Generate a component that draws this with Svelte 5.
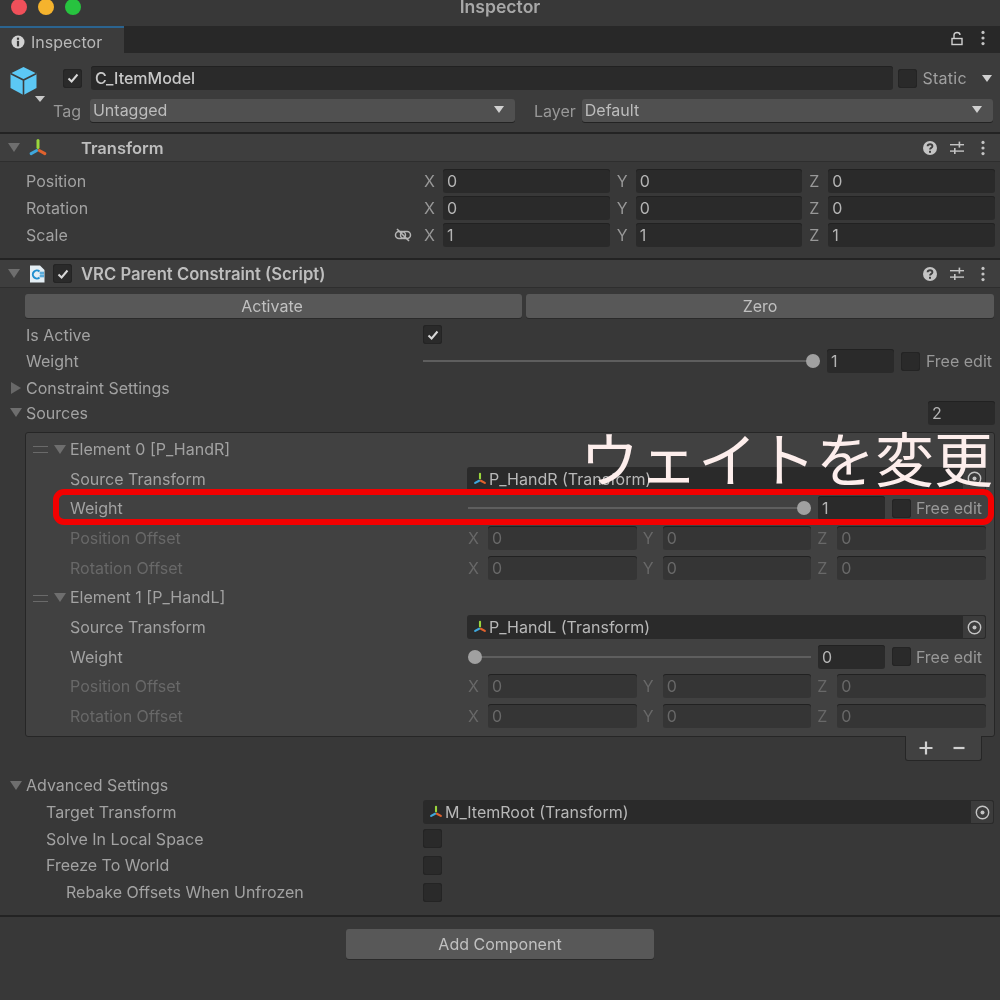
<script>
    const transformRows = [
        { label: 'Position', values: ['0', '0', '0'] },
        { label: 'Rotation', values: ['0', '0', '0'] },
        { label: 'Scale', values: ['1', '1', '1'], link: true }
    ];
    const elements = [
        { title: 'Element 0 [P_HandR]', source: 'P_HandR (Transform)', weight: 1 },
        { title: 'Element 1 [P_HandL]', source: 'P_HandL (Transform)', weight: 0 }
    ];
    const advanced = [
        { label: 'Solve In Local Space', cls: 'indent' },
        { label: 'Freeze To World', cls: 'indent' },
        { label: 'Rebake Offsets When Unfrozen', cls: 'indent2' }
    ];
    const axes = ['X', 'Y', 'Z'];
</script>

{#snippet axisIcon(size)}
    <svg class="axis" width={size} height={size} viewBox="0 0 16 16">
        <path d="M8 7.5V2" stroke="#9ad63c" stroke-width="2.4" stroke-linecap="round" />
        <path d="M7 10L2.5 12.5" stroke="#3fa7dc" stroke-width="2.4" stroke-linecap="round" />
        <path d="M9 10L13.5 12.5" stroke="#e0622e" stroke-width="2.4" stroke-linecap="round" />
    </svg>
{/snippet}

{#snippet triDown(cls)}
    <span class="tri-down {cls}"></span>
{/snippet}

{#snippet checkbox(checked)}
    <span class="check">
        {#if checked}
            <svg width="14" height="14" viewBox="0 0 14 14"><path d="M2.5 7.5L5.6 10.5L11.5 3.5" fill="none" stroke="#d8d8d8" stroke-width="2" /></svg>
        {/if}
    </span>
{/snippet}

{#snippet headerTools()}
    <div class="tools">
        <svg width="16" height="16" viewBox="0 0 16 16">
            <circle cx="8" cy="8" r="7" fill="#c4c4c4" />
            <path d="M5.6 6.2C5.8 3.6 10.4 3.6 10.4 6.2C10.4 8 8 7.8 8 9.6" fill="none" stroke="#3e3e3e" stroke-width="1.9" />
            <rect x="7" y="10.8" width="2" height="2" fill="#3e3e3e" />
        </svg>
        <svg width="16" height="16" viewBox="0 0 16 16" fill="#c4c4c4">
            <rect x="1" y="4" width="14" height="1.4" /><rect x="9.6" y="1.6" width="1.6" height="6" />
            <rect x="1" y="10.4" width="14" height="1.4" /><rect x="5" y="8" width="1.6" height="6" />
        </svg>
        <svg class="kebab" width="6" height="16" viewBox="0 0 6 16" fill="#c4c4c4">
            <circle cx="3" cy="2.4" r="1.6" /><circle cx="3" cy="8" r="1.6" /><circle cx="3" cy="13.6" r="1.6" />
        </svg>
    </div>
{/snippet}

{#snippet target()}
    <span class="target">
        <svg width="15" height="15" viewBox="0 0 15 15">
            <circle cx="7.5" cy="7.5" r="6.2" fill="none" stroke="#c4c4c4" stroke-width="1.4" />
            <circle cx="7.5" cy="7.5" r="2" fill="#c4c4c4" />
        </svg>
    </span>
{/snippet}

{#snippet sliderRow(value, thumbAtEnd)}
    <div class="slider" class:at-end={thumbAtEnd}>
        <span class="thumb"></span>
    </div>
    <span class="field num">{value}</span>
    {@render checkbox(false)}
    <span class="free">Free edit</span>
{/snippet}

{#snippet vec3(values, off)}
    <div class="vec3" class:off>
        {#each axes as axis, i}
            <div class="vec-item">
                <span class="axis-letter">{axis}</span>
                <span class="field">{values[i]}</span>
            </div>
        {/each}
    </div>
{/snippet}

<div class="window">
    <div class="titlebar">
        <div class="lights">
            <span class="light red"></span>
            <span class="light yellow"></span>
            <span class="light green"></span>
        </div>
        <span class="title">Inspector</span>
    </div>

    <div class="tabs">
        <div class="tab">
            <svg width="14" height="14" viewBox="0 0 14 14">
                <circle cx="7" cy="7" r="6.5" fill="#d2d2d2" />
                <rect x="5.9" y="2.6" width="2.2" height="2.2" fill="#3c3c3c" />
                <rect x="5.9" y="5.8" width="2.2" height="5.6" fill="#3c3c3c" />
            </svg>
            <span>Inspector</span>
        </div>
        <div class="tab-tools">
            <svg width="12" height="15" viewBox="0 0 12 15" fill="none" stroke="#cfcfcf" stroke-width="1.4">
                <rect x="1" y="7.5" width="10" height="6" />
                <path d="M3 7.5V4C3 0.6 9 0.6 9 4" />
            </svg>
            <svg width="6" height="16" viewBox="0 0 6 16" fill="#c4c4c4">
                <circle cx="3" cy="2.4" r="1.6" /><circle cx="3" cy="8" r="1.6" /><circle cx="3" cy="13.6" r="1.6" />
            </svg>
        </div>
    </div>

    <header class="object">
        <div class="cube-wrap">
            <svg width="29" height="30" viewBox="0 0 29 30">
                <path d="M14.5 1L27.5 7.5V22L14.5 29L1.5 22V7.5Z" fill="#5cc8f5" />
                <path d="M14.5 14V29M1.5 7.5L14.5 14L27.5 7.5" fill="none" stroke="#3c3c3c" stroke-width="1.6" />
            </svg>
            <span class="tri-down tiny"></span>
        </div>
        <div class="object-main">
            <div class="object-row">
                {@render checkbox(true)}
                <span class="field name">C_ItemModel</span>
                {@render checkbox(false)}
                <span class="static">Static</span>
                <span class="tri-down light-tri"></span>
            </div>
            <div class="object-row second">
                <span class="tag-label">Tag</span>
                <span class="dropdown tag">Untagged<span class="tri-down light-tri"></span></span>
                <span class="layer-label">Layer</span>
                <span class="dropdown layer">Default<span class="tri-down light-tri"></span></span>
            </div>
        </div>
    </header>

    <section class="component">
        <div class="comp-header">
            {@render triDown('fold')}
            {@render axisIcon(20)}
            <span class="comp-title transform-title">Transform</span>
            {@render headerTools()}
        </div>
        <div class="transform-body">
            {#each transformRows as row}
                <div class="prop">
                    <span class="label">{row.label}</span>
                    {#if row.link}
                        <svg class="link" width="18" height="14" viewBox="0 0 18 14" fill="none" stroke="#b5b5b5" stroke-width="1.5">
                            <rect x="1.5" y="3.5" width="10" height="7" rx="3.5" />
                            <rect x="6.5" y="3.5" width="10" height="7" rx="3.5" />
                            <path d="M3 1L15 13" stroke-width="1.6" />
                        </svg>
                    {/if}
                    {@render vec3(row.values, false)}
                </div>
            {/each}
        </div>
    </section>

    <section class="component">
        <div class="comp-header">
            {@render triDown('fold')}
            <svg class="script-icon" width="16" height="18" viewBox="0 0 16 18">
                <path d="M1 0.5H11L15.5 5V17.5H1Z" fill="#e4eef4" />
                <path d="M10.5 6.5A4 4 0 1 0 10.5 12.5" fill="none" stroke="#1f8fd0" stroke-width="2" />
                <path d="M10.5 8H15M10.5 11H15M12 6.5V12.5M14 6.5V12.5" stroke="#1f8fd0" stroke-width="0.9" />
            </svg>
            {@render checkbox(true)}
            <span class="comp-title script-title">VRC Parent Constraint (Script)</span>
            {@render headerTools()}
        </div>

        <div class="script-body">
            <div class="buttons">
                <span class="btn activate">Activate</span>
                <span class="btn zero">Zero</span>
            </div>

            <div class="prop main">
                <span class="label">Is Active</span>
                <div class="value">{@render checkbox(true)}</div>
            </div>
            <div class="prop main">
                <span class="label">Weight</span>
                <div class="value slider-row">{@render sliderRow(1, true)}</div>
            </div>
            <div class="prop main foldout">
                <span class="tri-right"></span>
                <span class="label">Constraint Settings</span>
            </div>
            <div class="prop main foldout sources">
                {@render triDown('small')}
                <span class="label">Sources</span>
                <span class="field size">2</span>
            </div>

            <div class="list">
                {#each elements as el}
                    <div class="list-row">
                        <span class="handle"></span>
                        {@render triDown('small')}
                        <span class="label">{el.title}</span>
                    </div>
                    <div class="list-row item">
                        <span class="label">Source Transform</span>
                        <div class="object-field">
                            {@render axisIcon(14)}
                            <span class="object-name">{el.source}</span>
                            {@render target()}
                        </div>
                    </div>
                    <div class="list-row item">
                        <span class="label">Weight</span>
                        <div class="value slider-row inner">{@render sliderRow(el.weight, el.weight === 1)}</div>
                    </div>
                    <div class="list-row item">
                        <span class="label off">Position Offset</span>
                        {@render vec3(['0', '0', '0'], true)}
                    </div>
                    <div class="list-row item">
                        <span class="label off">Rotation Offset</span>
                        {@render vec3(['0', '0', '0'], true)}
                    </div>
                {/each}
            </div>
            <div class="list-footer">
                <div class="plus-minus">
                    <svg width="14" height="14" viewBox="0 0 14 14"><path d="M7 0.5V13.5M0.5 7H13.5" stroke="#d0d0d0" stroke-width="2.2" /></svg>
                    <svg width="12" height="14" viewBox="0 0 12 14"><path d="M0.5 7H11.5" stroke="#d0d0d0" stroke-width="2.2" /></svg>
                </div>
            </div>

            <div class="prop main foldout advanced">
                {@render triDown('small')}
                <span class="label">Advanced Settings</span>
            </div>
            <div class="prop main">
                <span class="label indent">Target Transform</span>
                <div class="object-field adv">
                    {@render axisIcon(14)}
                    <span class="object-name">M_ItemRoot (Transform)</span>
                    {@render target()}
                </div>
            </div>
            {#each advanced as row}
                <div class="prop main">
                    <span class="label {row.cls}">{row.label}</span>
                    <div class="value">{@render checkbox(false)}</div>
                </div>
            {/each}
        </div>
    </section>

    <footer class="add">
        <span class="btn add-btn">Add Component</span>
    </footer>

    <div class="callout-text">ウェイトを変更</div>
    <div class="callout-box"></div>
</div>

<style>
    :global(body) {
        margin: 0;
        background: #383838;
    }
    .window {
        position: relative;
        width: 1000px;
        height: 1000px;
        overflow: hidden;
        background: #383838;
        color: #b8b8b8;
        font-family: Inter, "Noto Sans CJK JP", sans-serif;
        font-size: 16px;
        line-height: 1;
        filter: blur(0.3px);
    }
    .titlebar {
        position: relative;
        height: 26px;
        overflow: hidden;
        background: #383838;
        text-align: center;
    }
    .lights {
        position: absolute;
        left: 11px;
        top: -1px;
        display: flex;
        gap: 11px;
    }
    .light {
        width: 16px;
        height: 16px;
        border-radius: 50%;
    }
    .red { background: #f0505a; }
    .yellow { background: #f5b32d; }
    .green { background: #27c33f; }
    .title {
        display: block;
        margin-top: -2px;
        font-size: 17.6px;
        font-weight: 600;
        color: #a8a8a8;
    }
    .tabs {
        display: flex;
        justify-content: space-between;
        height: 27px;
        background: #282828;
    }
    .tab {
        display: flex;
        align-items: center;
        gap: 6px;
        box-sizing: border-box;
        width: 124px;
        padding: 2px 0 0 11px;
        border-top: 2px solid #2b6490;
        background: #3c3c3c;
        color: #b8b8b8;
    }
    .tab-tools {
        display: flex;
        align-items: center;
        gap: 17px;
        padding: 0 14px 3px 0;
    }
    .object {
        display: flex;
        box-sizing: border-box;
        height: 81px;
        padding: 13px 5px 0 9px;
        border-bottom: 2px solid #232323;
        background: #3c3c3c;
    }
    .cube-wrap {
        position: relative;
        width: 54px;
        height: 36px;
    }
    .tri-down {
        display: inline-block;
        flex: none;
        width: 0;
        height: 0;
        border-left: 6px solid transparent;
        border-right: 6px solid transparent;
        border-top: 9px solid #6e6e6e;
    }
    .tri-down.tiny {
        position: absolute;
        left: 26px;
        top: 30px;
        border-left-width: 5px;
        border-right-width: 5px;
        border-top: 6px solid #c8c8c8;
    }
    .tri-down.light-tri {
        border-left-width: 5.5px;
        border-right-width: 5.5px;
        border-top: 7px solid #d0d0d0;
    }
    .tri-down.fold {
        margin-left: 8px;
    }
    .tri-down.small {
        margin-left: -16px;
        margin-right: 4px;
    }
    .tri-right {
        width: 0;
        height: 0;
        margin-left: -15px;
        margin-right: 5px;
        border-top: 6px solid transparent;
        border-bottom: 6px solid transparent;
        border-left: 10px solid #686868;
    }
    .object-main {
        flex: 1;
    }
    .object-row {
        display: flex;
        align-items: center;
        height: 24px;
    }
    .object-row .check + .name {
        margin-left: 9px;
    }
    .object-row .name {
        flex: 1;
        height: 24px;
        padding-left: 4px;
        color: #c8c8c8;
        font-weight: 500;
    }
    .object-row .name + .check {
        margin-left: 5px;
    }
    .static {
        margin-left: 5px;
        margin-right: 15px;
        color: #a0a0a0;
        letter-spacing: 0.3px;
    }
    .object-row > .light-tri {
        margin-right: 3px;
    }
    .object-row.second {
        margin: 9px 0 0 -10px;
        height: 23px;
    }
    .tag-label {
        color: #989898;
        margin-right: 9px;
    }
    .layer-label {
        margin: 0 6px 0 19px;
        color: #989898;
    }
    .dropdown {
        display: flex;
        align-items: center;
        justify-content: space-between;
        box-sizing: border-box;
        height: 23px;
        padding: 0 11px 2px 3px;
        border-radius: 3px;
        background: #505050;
        box-shadow: 0 1px 0 #232323;
        color: #bcbcbc;
    }
    .dropdown.tag {
        width: 425px;
    }
    .dropdown.layer {
        flex: 1;
        margin-right: 2px;
    }
    .comp-header {
        display: flex;
        align-items: center;
        box-sizing: border-box;
        height: 28px;
        border-bottom: 1px solid #2e2e2e;
        background: #3e3e3e;
    }
    .axis {
        flex: none;
    }
    .comp-header .axis {
        margin-left: 8px;
    }
    .comp-header .check {
        margin-left: 1px;
    }
    .script-icon {
        flex: none;
        margin: 0 7px 0 9px;
    }
    .comp-title {
        flex: 1;
        margin-left: 8px;
        padding-top: 2px;
        color: #bebebe;
        font-size: 16.5px;
        font-weight: 600;
    }
    .transform-title {
        margin-left: 33px;
    }
    .script-title {
        margin-left: 9px;
        font-size: 16.65px;
    }
    .tools {
        display: flex;
        align-items: center;
        gap: 11px;
        padding-right: 14px;
    }
    .kebab {
        margin-left: 4px;
    }
    .transform-body {
        box-sizing: border-box;
        height: 98px;
        padding-top: 5px;
        border-bottom: 2px solid #232323;
    }
    .prop {
        position: relative;
        display: flex;
        align-items: center;
        height: 27px;
        padding: 0 5px 0 26px;
    }
    .prop.main {
        height: 26.67px;
    }
    .label {
        flex: none;
        color: #a2a2a2;
    }
    .label.off {
        color: #686868;
    }
    .label.indent {
        margin-left: 20px;
    }
    .label.indent2 {
        margin-left: 40px;
    }
    .prop .label {
        width: 398px;
    }
    .prop.main .label {
        width: 397px;
    }
    .prop.main .label.indent {
        width: 377px;
    }
    .prop.main .label.indent2 {
        width: 357px;
    }
    .link {
        position: absolute;
        left: 394px;
        top: 7px;
    }
    .vec3 {
        flex: 1;
        display: grid;
        grid-template-columns: repeat(3, 1fr);
        gap: 7px;
    }
    .vec-item {
        display: flex;
        align-items: center;
    }
    .axis-letter {
        flex: none;
        width: 19px;
        color: #989898;
    }
    .field {
        display: flex;
        align-items: center;
        flex: 1;
        box-sizing: border-box;
        height: 24px;
        padding: 0 4px;
        border-radius: 3px;
        background: #2a2a2a;
        box-shadow: inset 0 1px 0 #212121;
        color: #b4b4b4;
    }
    .vec3.off .field {
        background: #353535;
        color: #686868;
    }
    .vec3.off .axis-letter {
        color: #686868;
    }
    .check {
        display: flex;
        align-items: center;
        justify-content: center;
        flex: none;
        box-sizing: border-box;
        width: 19px;
        height: 19px;
        border-radius: 3px;
        background: #2a2a2a;
        box-shadow: inset 0 0 0 1px #242424;
    }
    .script-body {
        padding-top: 6px;
    }
    .buttons {
        display: flex;
        gap: 4px;
        padding: 0 6px 3.5px 25px;
    }
    .btn {
        display: flex;
        align-items: center;
        justify-content: center;
        box-sizing: border-box;
        height: 24px;
        border-radius: 3px;
        background: #585858;
        box-shadow: 0 1px 0 #2a2a2a;
        color: #c0c0c0;
    }
    .activate {
        width: 497px;
        padding-right: 3px;
    }
    .zero {
        flex: 1;
    }
    .value {
        flex: 1;
        display: flex;
        align-items: center;
    }
    .slider-row {
        padding-right: 3px;
    }
    .slider-row.inner {
        padding-right: 4px;
    }
    .slider-row .check {
        margin-left: 7px;
    }
    .slider {
        position: relative;
        flex: 1;
        height: 2px;
        margin-right: 7px;
        background: #5e5e5e;
    }
    .thumb {
        position: absolute;
        left: 0;
        top: -6px;
        width: 14px;
        height: 14px;
        border-radius: 50%;
        background: #a0a0a0;
    }
    .slider.at-end .thumb {
        left: auto;
        right: 0;
    }
    .num {
        flex: none;
        width: 67px;
    }
    .free {
        margin-left: 6px;
        color: #989898;
    }
    .slider-row.inner .free {
        margin-left: 5px;
    }
    .prop.main.foldout {
        height: 26px;
    }
    .prop.main.foldout .label {
        width: auto;
    }
    .prop.main.sources {
        height: 24px;
    }
    .prop.main.sources .label {
        flex: 1;
    }
    .prop.main.advanced {
        height: 27px;
    }
    .size {
        flex: none;
        width: 67px;
    }
    .list {
        box-sizing: border-box;
        height: 305px;
        margin: 7px 5px 0 25px;
        padding: 1.5px 8px 0 44px;
        border: 1px solid #262626;
        border-radius: 3px;
        background: #414141;
    }
    .list-row {
        position: relative;
        display: flex;
        align-items: center;
        height: 29.67px;
    }
    .list-row.item .label {
        width: 398px;
    }
    .list-row.item .vec3 {
        gap: 6px;
    }
    .list-row.item .axis-letter {
        width: 20px;
    }
    .list-row.item .object-field {
        margin-left: -1px;
    }
    .handle {
        position: absolute;
        left: -37px;
        top: 12px;
        width: 15px;
        height: 5px;
        border-top: 1px solid #6a6a6a;
        border-bottom: 1px solid #6a6a6a;
    }
    .object-field {
        position: relative;
        flex: 1;
        display: flex;
        align-items: center;
        box-sizing: border-box;
        height: 24px;
        padding-left: 6px;
        border-radius: 3px;
        background: #2a2a2a;
        color: #b8b8b8;
    }
    .object-field.adv {
        margin-right: 1px;
    }
    .object-field .axis {
        margin-right: 2px;
    }
    .target {
        position: absolute;
        right: 0;
        top: 0;
        display: flex;
        align-items: center;
        justify-content: center;
        box-sizing: border-box;
        width: 24px;
        height: 24px;
        border: 1px solid #2a2a2a;
        border-radius: 0 3px 3px 0;
        background: #3c3c3c;
    }
    .list-footer {
        display: flex;
        justify-content: flex-end;
        padding-right: 18px;
        margin-top: -1px;
    }
    .plus-minus {
        display: flex;
        align-items: center;
        justify-content: center;
        gap: 20px;
        box-sizing: border-box;
        width: 77px;
        height: 25px;
        padding-right: 4px;
        border: 1px solid #262626;
        border-top: none;
        border-radius: 0 0 3px 3px;
        background: #414141;
    }
    .list-footer + .prop {
        margin-top: 11px;
    }
    .add {
        display: flex;
        justify-content: center;
        box-sizing: border-box;
        height: 85px;
        margin-top: 10px;
        padding-top: 12px;
        border-top: 2px solid #232323;
    }
    .add-btn {
        width: 308px;
        height: 30px;
    }
    .callout-text {
        position: absolute;
        left: 580px;
        top: 423px;
        color: #fdeeec;
        font-family: "Noto Sans CJK JP", sans-serif;
        font-size: 59px;
        font-weight: 400;
        line-height: 68px;
        white-space: nowrap;
    }
    .callout-box {
        position: absolute;
        left: 53px;
        top: 489px;
        box-sizing: border-box;
        width: 941px;
        height: 36px;
        border: 6px solid #f30000;
        border-radius: 11px;
    }
</style>
